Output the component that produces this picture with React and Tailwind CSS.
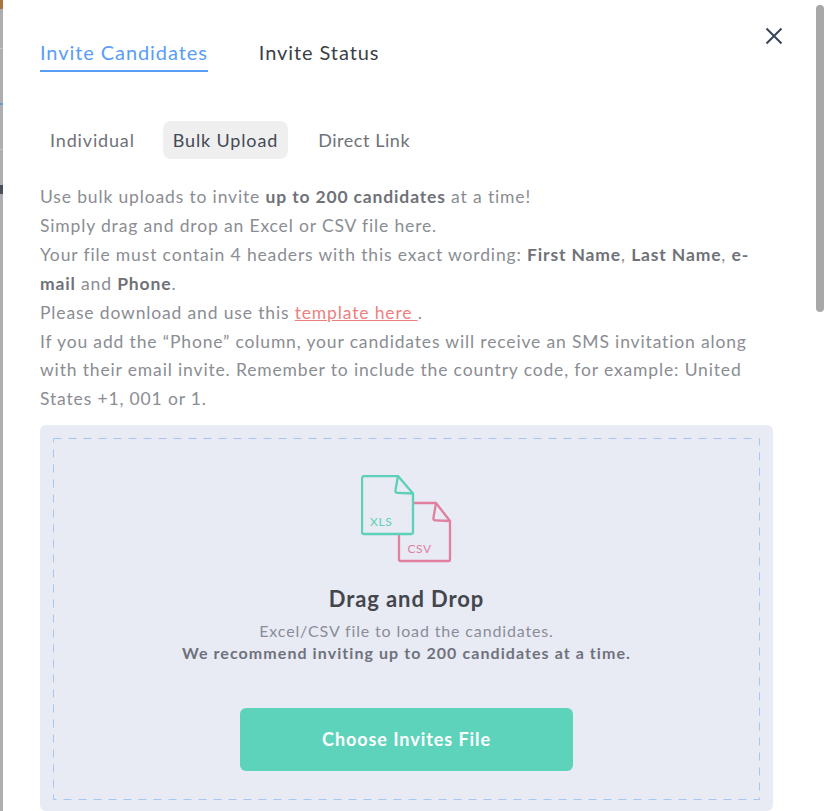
import React from 'react';

const FileIcons = () => (
  <svg width="92" height="90" viewBox="0 0 92 90" fill="none" className="mx-auto block">
    <path d="M52 28H75L89 46V84.500a1.500 1.500 0 0 1-1.500 1.500H39.500A1.500 1.500 0 0 1 38 84.500V58" stroke="#e07fa0" strokeWidth="2.300" strokeLinejoin="round" />
    <path d="M75 28L72.500 42.500a2 2 0 0 0 2 2.800L89 46" stroke="#e07fa0" strokeWidth="2.300" strokeLinejoin="round" />
    <path d="M3.500 1H37L52 18.500V57.500a1.500 1.500 0 0 1-1.500 1.500H2.500A1.500 1.500 0 0 1 1 57.500V3.500a2.500 2.500 0 0 1 2.500-2.500Z" fill="#e8eaf4" stroke="#5dd0b9" strokeWidth="2.300" strokeLinejoin="round" />
    <path d="M37 1L34.500 15a2 2 0 0 0 2 2.800L52 18.500" stroke="#5dd0b9" strokeWidth="2.300" strokeLinejoin="round" />
    <text x="9" y="51" fontSize="12" fill="#5dd0b9" fontFamily="Lato, sans-serif" letterSpacing="0.6">XLS</text>
    <text x="46.500" y="78" fontSize="12" fill="#e07fa0" fontFamily="Lato, sans-serif" letterSpacing="0.6">CSV</text>
  </svg>
);

const DashedFrame = () => (
  <svg width="707" height="362" className="pointer-events-none absolute left-0 top-0" fill="none">
    <rect x="0.500" y="0.500" width="706" height="361" stroke="#a4c8f2" strokeDasharray="8 7" />
  </svg>
);

const App = () => {
  return (
    <div className="flex h-[811px] w-[828px] overflow-hidden bg-white font-['Lato',sans-serif]">
      <div className="flex w-[3px] shrink-0 flex-col bg-[#aeaeb2]">
        <div className="h-[9px] bg-[#a8743f]"></div>
        <div className="mt-[39px] h-px bg-[#c6c6c8]"></div>
        <div className="mt-[54px] h-[2px] bg-[#6d9bd8]"></div>
        <div className="mt-[44px] h-px bg-[#c6c6c8]"></div>
        <div className="mt-[35px] h-[9px] bg-[#4a4f5c]"></div>
      </div>
      <div className="flex h-[811px] w-[825px] rounded-md bg-white">
        <div className="w-[812px] shrink-0 overflow-hidden">
          <div className="flex items-start justify-between pl-[37px] pr-[32px] pt-[39px]">
            <div className="flex gap-[51px] text-[20px] leading-[27px] tracking-[0.92px]">
              <div className="border-b-2 border-[#5a9df8] pb-[4px] text-[#5a9df8]">Invite Candidates</div>
              <div className="text-[#3a3f47]">Invite Status</div>
            </div>
            <svg width="18" height="18" viewBox="0 0 18 18" fill="none" className="-mt-[12px]" stroke="#36465a" strokeWidth="2">
              <path d="M1.500 1.500L16.500 16.500M16.500 1.500L1.500 16.500" />
            </svg>
          </div>

          <div className="mt-[49px] flex items-center gap-[18px] pl-[37px] text-[18px] leading-[24px] tracking-[0.85px]">
            <div className="rounded-lg px-[10px] py-[7px] text-[#6f7278]">Individual</div>
            <div className="rounded-lg bg-[#efefef] px-[10px] py-[7px] text-[#444a55]">Bulk Upload</div>
            <div className="ml-[2px] rounded-lg px-[10px] py-[7px] tracking-[0.55px] text-[#6f7278]">Direct Link</div>
          </div>

          <div className="mt-[24px] w-[770px] pl-[37px] text-[17.500px] leading-[28.900px] tracking-[0.85px] text-[#8a8d93]">
            <p>Use bulk uploads to invite <b className="font-bold text-[#6f7278]">up to 200 candidates</b> at a time!</p>
            <p>Simply drag and drop an Excel or CSV file here.</p>
            <p>
              Your file must contain 4 headers with this exact wording: <b className="font-bold text-[#6f7278]">First Name</b>, <b className="font-bold text-[#6f7278]">Last Name</b>, <b className="font-bold text-[#6f7278]">e-</b><wbr /><b className="font-bold text-[#6f7278]">mail</b> and <b className="font-bold text-[#6f7278]">Phone</b>.
            </p>
            <p>Please download and use this <a className="text-[#ee7f7f] underline">template here </a>.</p>
            <p>If you add the “Phone” column, your candidates will receive an SMS invitation along with their email invite. Remember to include the country code, for example: United States +1, 001 or 1.</p>
          </div>

          <div className="ml-[37px] mt-[11px] h-[386px] w-[733px] rounded-md bg-[#e8eaf4] p-[13px]">
            <div className="relative flex h-[362px] flex-col items-center pt-[37px]">
              <DashedFrame />
              <FileIcons />
              <div className="mt-[20px] text-[22px] font-bold leading-[28px] tracking-[0.9px] text-[#43464d]">Drag and Drop</div>
              <div className="mt-[7px] text-center text-[16px] leading-[22px] text-[#8a8d98]">
                <p className="tracking-[0.86px]">Excel/CSV file to load the candidates.</p>
                <p className="font-bold tracking-[1.07px] text-[#6f727c]">We recommend inviting up to 200 candidates at a time.</p>
              </div>
              <button className="mt-[44px] h-[63px] w-[333px] rounded-md bg-[#5dd3bb] text-[18px] font-bold tracking-[0.93px] text-white">Choose Invites File</button>
            </div>
          </div>
        </div>
        <div className="flex w-[13px] shrink-0 pl-px">
          <div className="mt-[5px] h-[307px] w-[8px] rounded-full bg-[#a8a8a8]"></div>
        </div>
      </div>
    </div>
  );
};

export default App;
